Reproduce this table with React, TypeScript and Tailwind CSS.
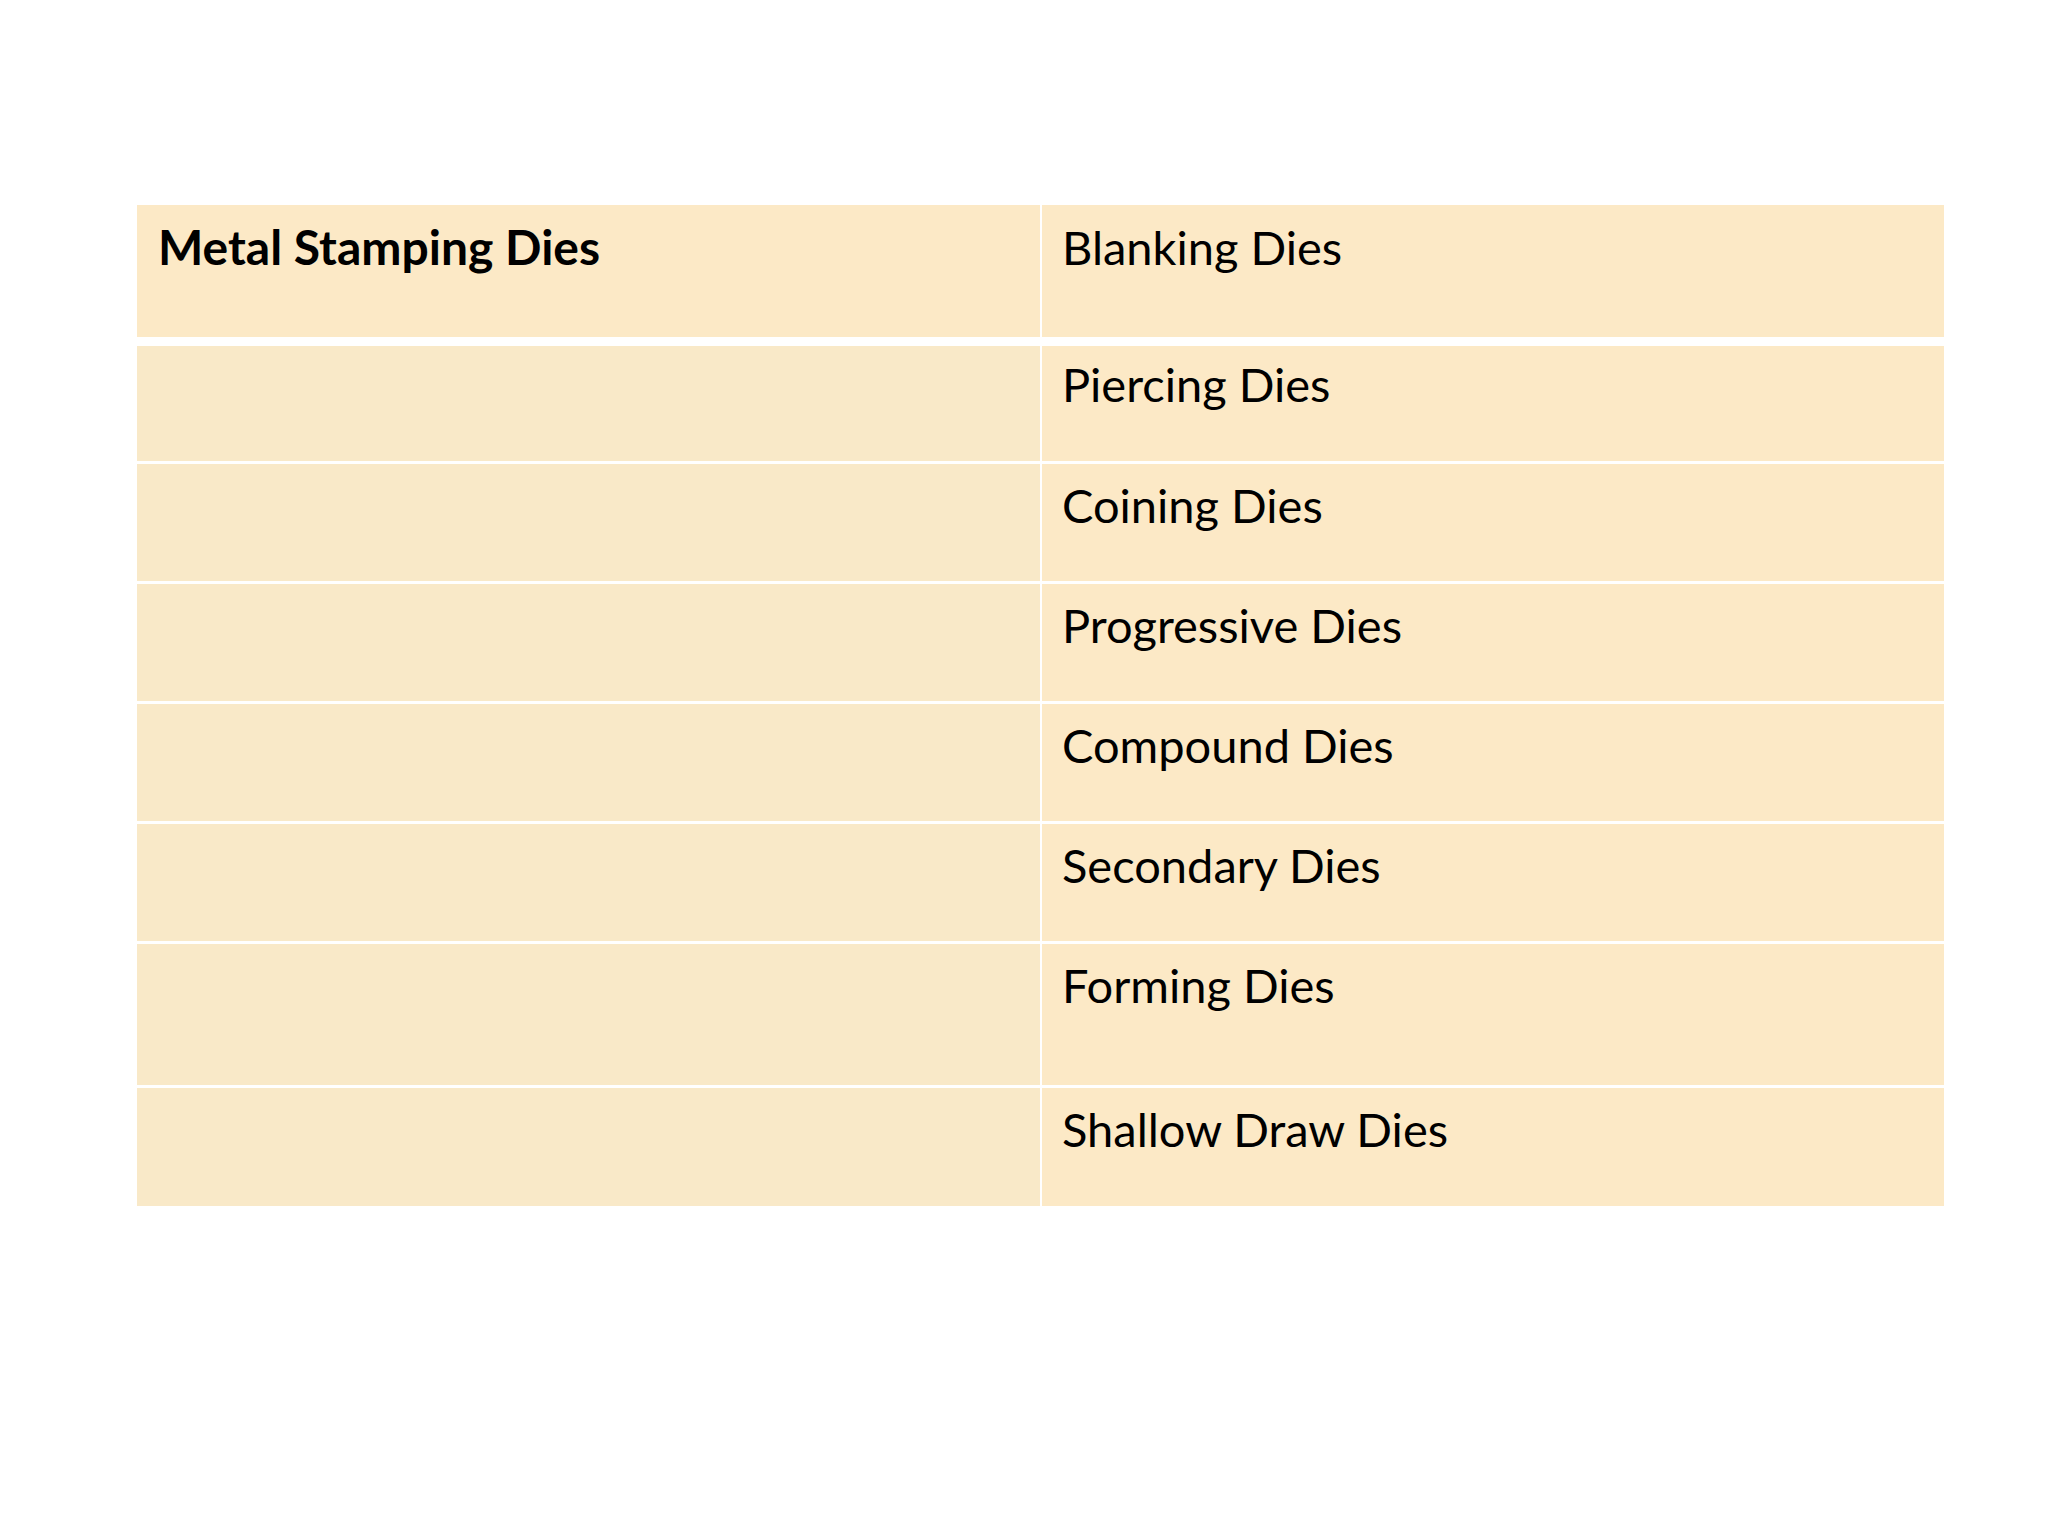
import React from "react";

const rows: { label: string; h: string }[] = [
  { label: "Piercing Dies", h: "h-[115px]" },
  { label: "Coining Dies", h: "h-[120px]" },
  { label: "Progressive Dies", h: "h-[120px]" },
  { label: "Compound Dies", h: "h-[120px]" },
  { label: "Secondary Dies", h: "h-[120px]" },
  { label: "Forming Dies", h: "h-[144px]" },
  { label: "Shallow Draw Dies", h: "h-[121px]" },
];

export default function App() {
  return (
    <div className="w-[2048px] h-[1536px] bg-white pt-[205px] pl-[137px] font-['Lato',sans-serif] text-black">
      <div className="w-[1807px] flex flex-col">
        <div className="flex h-[132px] bg-[#fce9c6]">
          <div className="w-[903px] pl-[21px] pt-[11px] text-[48px] leading-[62px] font-bold">
            Metal Stamping Dies
          </div>
          <div className="w-[2px] bg-white" />
          <div className="flex-1 pl-[20px] pt-[11px] text-[47px] leading-[62px]">
            Blanking Dies
          </div>
        </div>
        <div className="h-[9px]" />
        {rows.map((r, i) => (
          <div
            key={r.label}
            className={`flex ${r.h} ${i > 0 ? "border-t-[3px] border-white" : ""}`}
          >
            <div className="w-[903px] bg-[#f9e9c8]" />
            <div className="w-[2px] bg-white" />
            <div
              className={`flex-1 bg-[#fce9c6] pl-[20px] ${i > 0 ? "pt-[10px]" : "pt-[7px]"} text-[47px] leading-[62px]`}
            >
              {r.label}
            </div>
          </div>
        ))}
      </div>
    </div>
  );
}
